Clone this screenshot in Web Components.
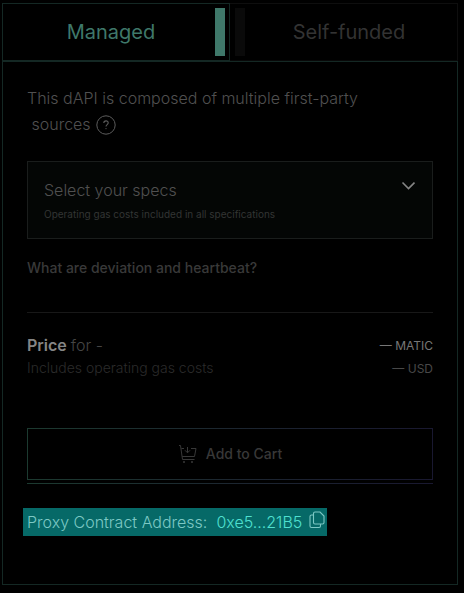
<!DOCTYPE html>
<html lang="en">
<head>
<meta charset="utf-8">
<meta name="viewport" content="width=device-width, initial-scale=1">
<title>dAPI pricing</title>
<style>
body { margin: 0; padding: 3px 6px 8px 2px; background: #000; color: #4c4c4c; font-family: Inter, "Liberation Sans", sans-serif; font-size: 16px; line-height: 26px; }
</style>
</head>
<body>
<dapi-card>
  <tab-bar slot="tabs">
    <plan-tab selected>Managed</plan-tab>
    <plan-tab>Self-funded</plan-tab>
  </tab-bar>
  <info-text>This dAPI is composed of multiple first-party <span>&nbsp;sources</span></info-text>
  <spec-select caption="Operating gas costs included in all specifications">Select your specs</spec-select>
  <help-link>What are deviation and heartbeat?</help-link>
  <price-summary>
    <b slot="label">Price</b><span slot="plan">for -</span>
    <span slot="note">Includes operating gas costs</span>
    <span slot="main">— MATIC</span>
    <span slot="sub">— USD</span>
  </price-summary>
  <cart-button>Add to Cart</cart-button>
  <proxy-address address="0xe5...21B5">Proxy Contract Address:</proxy-address>
</dapi-card>
<script>
function define(name, html, setup) {
  customElements.define(name, class extends HTMLElement {
    constructor() {
      super();
      this.attachShadow({ mode: 'open' }).innerHTML = html;
    }
    connectedCallback() { if (setup) setup(this, this.shadowRoot); }
  });
}

define('dapi-card', `
<style>
:host { display: block; }
.panel { box-sizing: border-box; display: flex; flex-direction: column; border: 1px solid #142824; padding: 23px 24px 48px; }
</style>
<slot name="tabs"></slot>
<div class="panel"><slot></slot></div>`);

define('tab-bar', `
<style>
:host { display: grid; grid-template-columns: 1fr 1fr; }
</style>
<slot></slot>`);

define('plan-tab', `
<style>
:host { display: block; }
button { box-sizing: border-box; width: 100%; height: 58px; display: flex; align-items: stretch; flex-direction: row-reverse; margin: 0; padding: 4px 4px 4px 5px; border: 1px solid #0e0e0e; border-bottom-color: #080808; border-left: 0; background: #000; color: #333; font: 400 20px/48px Inter, "Liberation Sans", sans-serif; text-align: center; }
.text { flex: 1; }
.bar { flex: none; width: 10px; background: #0a0a0a; }
:host([selected]) button { flex-direction: row; padding: 4px; border: 1px solid #142824; color: #3f786a; }
:host([selected]) .bar { background: #3f786a; }
</style>
<button type="button" role="tab"><span class="text"><slot></slot></span><span class="bar"></span></button>`,
(el, root) => root.querySelector('button').setAttribute('aria-selected', el.hasAttribute('selected')));

define('info-text', `
<style>
:host { display: block; width: 350px; max-width: 100%; color: #505050; font-weight: 300; }
button { display: inline-block; vertical-align: middle; margin: 0 0 2px 1px; padding: 0; border: 0; background: none; color: #5c5c5c; }
svg { display: block; }
</style>
<slot></slot>
<button type="button" aria-label="More information">
<svg width="20" height="20" viewBox="0 0 20 20" fill="none" stroke="currentColor"><circle cx="10" cy="10" r="9.2"/><path d="M7.8 8.1C7.8 5.1 12.3 5.2 12.2 7.9C12.1 9.6 10 9.6 10 11.6" stroke-width="1.1"/><circle cx="10" cy="13.6" r=".6" fill="currentColor" stroke="none"/></svg>
</button>`);

define('spec-select', `
<style>
:host { display: block; margin-top: 24px; }
.box { display: grid; grid-template-columns: 1fr auto; border: 1px solid #1a1d1c; background: #040605; padding: 15px 16px 16px; }
select { appearance: none; min-width: 0; margin: 0; padding: 0; border: 0; background: none; color: #505050; font: 300 16px/26px Inter, "Liberation Sans", sans-serif; }
svg { margin: 4px 1px 0 0; color: #858585; }
small { grid-column: 1 / -1; margin-top: 3px; color: #333534; font-size: 10px; line-height: 16px; }
</style>
<label class="box">
<select><option></option></select>
<svg width="14" height="10" viewBox="0 0 14 10" fill="none" stroke="currentColor" stroke-width="1.6"><path d="M1.500 1.500 7.500 7.500 13.500 1.500"/></svg>
<small></small>
</label>`,
(el, root) => {
  root.querySelector('option').textContent = el.textContent;
  root.querySelector('small').textContent = el.getAttribute('caption');
});

define('help-link', `
<style>
:host { display: block; margin-top: 17px; font-size: 14px; line-height: 24px; }
a { color: #393939; font-weight: 500; text-decoration: none; }
</style>
<a href="#help"><slot></slot></a>`);

define('price-summary', `
<style>
:host { display: flex; justify-content: space-between; margin-top: 32px; padding-top: 20px; border-top: 1px solid #181818; line-height: 24px; font-weight: 300; }
.title { display: flex; gap: 4px; color: #454545; }
::slotted(b) { color: #858585; font-weight: 600; }
.note { color: #2b2b2b; font-size: 14px; line-height: 22px; }
.cost { padding-top: 1px; text-align: right; font-size: 12px; font-weight: 400; }
.main { color: #777; }
.sub { color: #484848; line-height: 22px; }
</style>
<div><div class="title"><slot name="label"></slot><slot name="plan"></slot></div><div class="note"><slot name="note"></slot></div></div>
<div class="cost"><div class="main"><slot name="main"></slot></div><div class="sub"><slot name="sub"></slot></div></div>`);

define('cart-button', `
<style>
:host { display: block; margin-top: 48px; padding-bottom: 3px; border-bottom: 1px solid; border-image: linear-gradient(90deg, #1c3a30, #1c2630 50%, #191830) 1; }
button { box-sizing: border-box; width: 100%; height: 52px; display: flex; align-items: center; justify-content: center; gap: 8px; margin: 0; padding: 0; border: 1px solid; border-image: linear-gradient(90deg, #1c3a30, #1c2630 50%, #191830) 1; background: #000; color: #383838; font: 500 14px/20px Inter, "Liberation Sans", sans-serif; }
</style>
<button type="button">
<svg width="20" height="20" viewBox="0 0 20 20" fill="none" stroke="currentColor" stroke-width="1"><path d="M1 1.500H2.500L4.500 15.500H16.500M3.400 4.500H6M13 4.500H18L16.500 12.500H4.200M9.500 3V8.500M7 6.300 9.500 8.800 12 6.300"/><circle cx="6" cy="18" r="1" fill="currentColor" stroke="none"/><circle cx="14" cy="18" r="1" fill="currentColor" stroke="none"/></svg>
<span><slot></slot></span></button>`);

define('proxy-address', `
<style>
:host { display: flex; align-items: center; align-self: flex-start; margin: 24px 0 0 -4px; padding: 0 2px 0 4px; background: #066967; color: #7cc8c4; line-height: 28px; font-weight: 300; }
a { margin-left: 9px; color: #4fe0d0; text-decoration: none; }
button { margin: 0 0 4px 7px; padding: 0; border: 0; background: none; color: #7cc8c4; }
svg { display: block; }
</style>
<span><slot></slot></span><a href="#contract"></a>
<button type="button" aria-label="Copy address"><svg width="16" height="18" viewBox="0 0 16 18" fill="none" stroke="currentColor" stroke-width="1.1"><path d="M4.5 2.5Q4.5 1 6 1H11L15 5V11.500Q15 13 13.500 13H6Q4.500 13 4.500 11.500ZM4.500 4H2.500Q1 4 1 5.500V15Q1 16.500 2.500 16.500H10Q11.500 16.500 11.500 15V13"/></svg></button>`,
(el, root) => root.querySelector('a').textContent = el.getAttribute('address'));
</script>
</body>
</html>
